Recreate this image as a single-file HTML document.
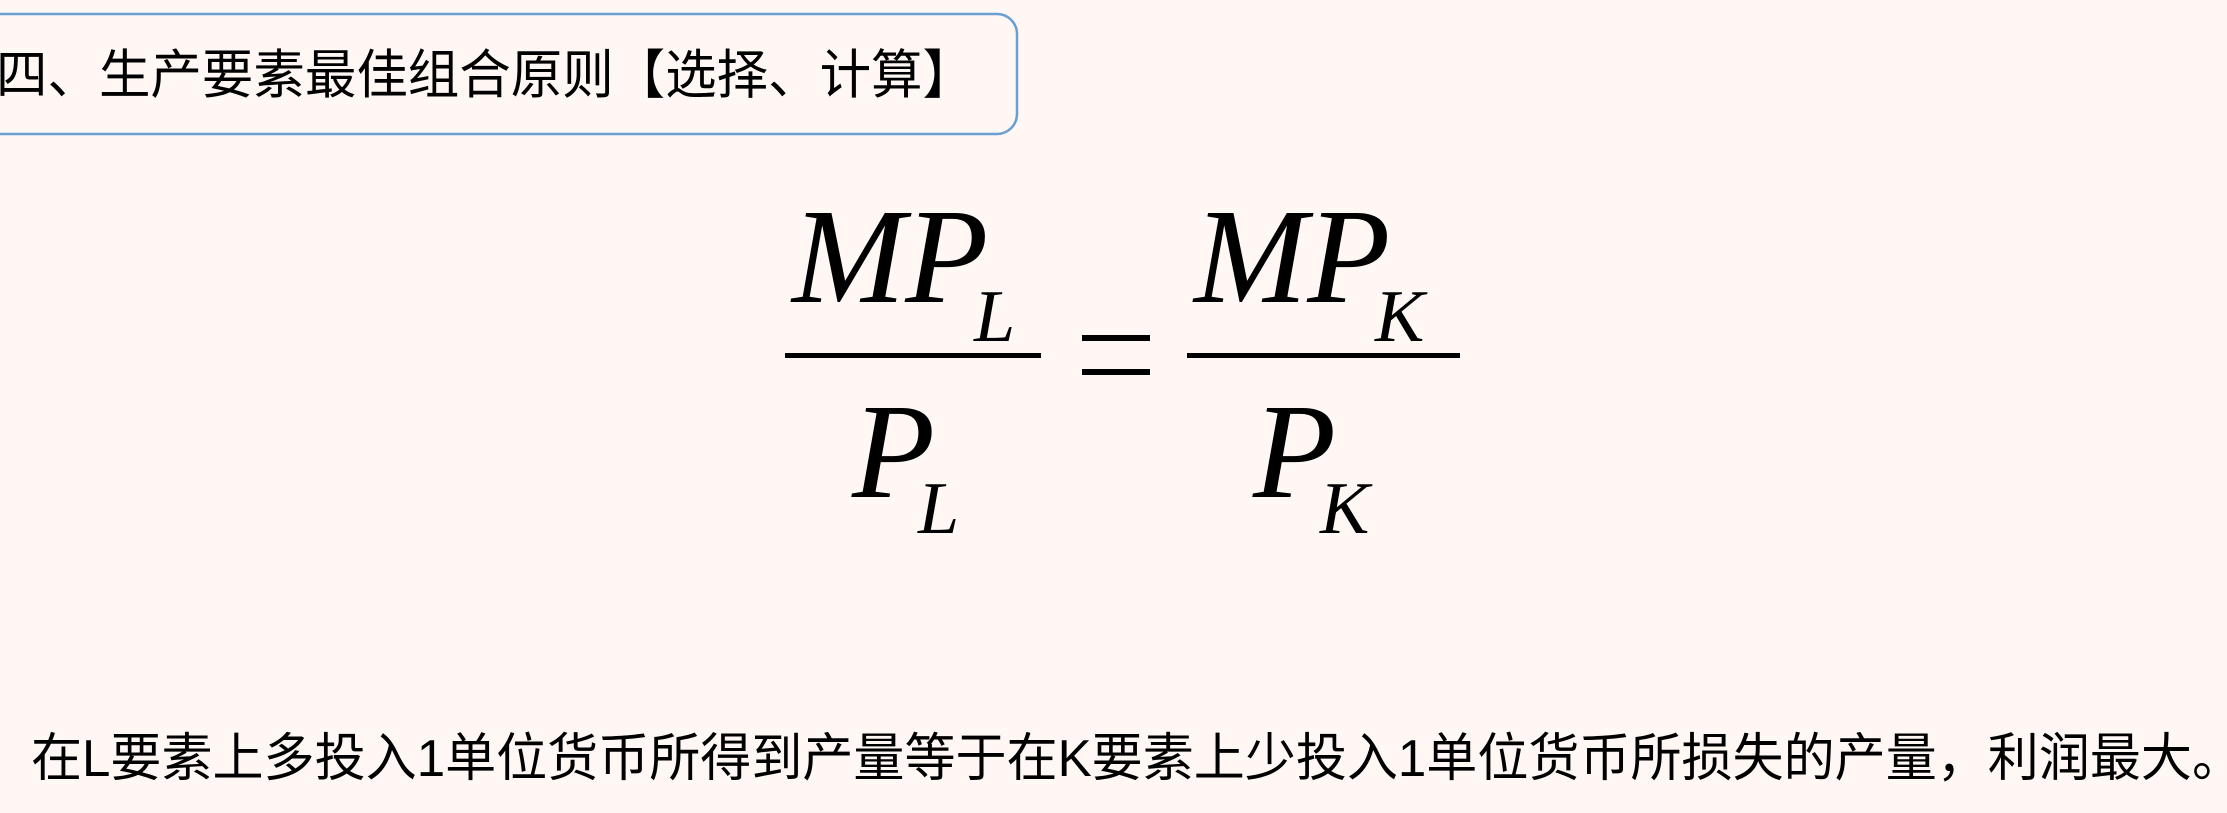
<!DOCTYPE html>
<html><head><meta charset="utf-8"><style>
html,body{margin:0;padding:0;background:#fef7f4;width:2227px;height:813px;overflow:hidden}
</style></head><body>
<svg width="2227" height="813" xmlns="http://www.w3.org/2000/svg" style="position:absolute;left:0;top:0">
<rect x="0" y="0" width="2227" height="813" fill="#fef7f4"/>
<rect x="-30" y="14" width="1047" height="120" rx="20" ry="20" fill="none" stroke="#6a9fd2" stroke-width="2.5"/>
<text x="-4" y="93" font-family="Liberation Sans, Noto Sans CJK SC, sans-serif" font-size="53" fill="#000" textLength="978" lengthAdjust="spacingAndGlyphs">四、生产要素最佳组合原则【选择、计算】</text>
<g font-family="Liberation Serif, serif" font-style="italic" fill="#000">
<text x="792" y="302" font-size="136">MP</text>
<text x="974" y="341" font-size="74">L</text>
<text x="852" y="497" font-size="136">P</text>
<text x="918" y="533" font-size="74">L</text>
<text x="1194" y="302" font-size="136">MP</text>
<text x="1375" y="341" font-size="74">K</text>
<text x="1253" y="497" font-size="136">P</text>
<text x="1320" y="533" font-size="74">K</text>
</g>
<rect x="785" y="353" width="256" height="5" fill="#000"/>
<rect x="1187" y="353" width="273" height="5" fill="#000"/>
<rect x="1082" y="335" width="68" height="6" fill="#000"/>
<rect x="1082" y="369" width="68" height="6" fill="#000"/>
<text x="31" y="776" font-family="Liberation Sans, Noto Sans CJK SC, sans-serif" font-size="52" fill="#000" textLength="2212" lengthAdjust="spacingAndGlyphs">在L要素上多投入1单位货币所得到产量等于在K要素上少投入1单位货币所损失的产量，利润最大。</text>
</svg>
</body></html>
